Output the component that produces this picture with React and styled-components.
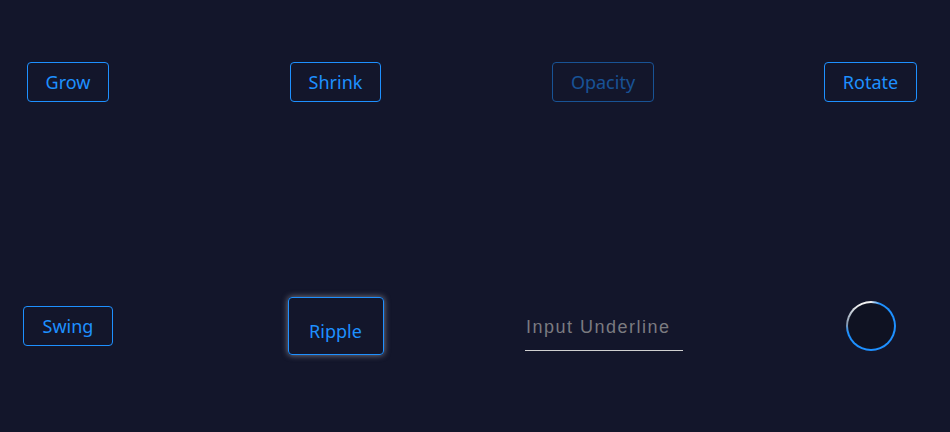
import React from 'react'
import styled, { createGlobalStyle, css } from 'styled-components'

const GlobalStyle = createGlobalStyle`
    html, body {
        margin: 0;
        padding: 0;
        background: #13162b;
    }
    body {
        font-family: "Noto Sans", "Open Sans", sans-serif;
    }
`

const BLUE = '#1e90ff'

const App = () => {
    return (
        <>
            <GlobalStyle />
            <Page>
                <Cell><Button>Grow</Button></Cell>
                <Cell><Button>Shrink</Button></Cell>
                <Cell><Button $dim>Opacity</Button></Cell>
                <Cell><Button>Rotate</Button></Cell>

                <Cell><Button $wide>Swing</Button></Cell>
                <Cell><RippleButton>Ripple</RippleButton></Cell>
                <Cell><UnderlineInput placeholder="Input Underline" /></Cell>
                <Cell><Spinner /></Cell>
            </Page>
        </>
    )
}

export default App

const Page = styled.div`
    display: grid;
    grid-template-columns: repeat(4, 120px);
    grid-template-rows: 60px 60px;
    column-gap: 147.5px;
    row-gap: 184px;
    padding: 52px 0 0 8px;
    height: 432px;
    box-sizing: border-box;
`
const Cell = styled.div`
    display: flex;
    align-items: center;
    justify-content: center;
`
const Button = styled.button`
    font-family: "Noto Sans", sans-serif;
    font-size: 18px;
    color: ${BLUE};
    background: transparent;
    border: 1px solid ${BLUE};
    border-radius: 4px;
    height: 40px;
    padding: 0 ${p => (p.$wide ? 19 : 18)}px;
    white-space: nowrap;
    ${p => p.$dim && css`
        opacity: 0.5;
    `}
`
const RippleButton = styled(Button)`
    height: 58px;
    width: 96px;
    padding: 10px 0 0;
    box-shadow: 0 0 6px rgba(220, 220, 230, 0.55);
`
const UnderlineInput = styled.input`
    font-family: "Liberation Sans", Arial, sans-serif;
    font-size: 18px;
    letter-spacing: 1.5px;
    width: 157px;
    flex: none;
    padding: 0 0 12px 1px;
    margin: 16px 0 0 2px;
    background: transparent;
    border: none;
    border-bottom: 1px solid #d0d0d0;
    outline: none;
    color: #ddd;
    &::placeholder {
        color: #7b7b80;
    }
`
const Spinner = styled.div`
    width: 50px;
    height: 50px;
    box-sizing: border-box;
    border-radius: 50%;
    border: 2px solid transparent;
    background:
        linear-gradient(#0f1222, #0f1222) padding-box,
        conic-gradient(#f2f2f2 0deg, ${BLUE} 22deg, ${BLUE} 255deg, #8a9bb0 275deg, #f2f2f2 330deg) border-box;
`
